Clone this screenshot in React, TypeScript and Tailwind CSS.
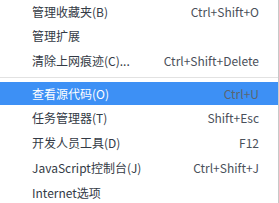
const items = [
  { label: '管理收藏夹(B)', key: 'Ctrl+Shift+O', h: 'h-[24px]' },
  { label: '管理扩展', key: '', h: 'h-[24px]' },
  { label: '清除上网痕迹(C)...', key: 'Ctrl+Shift+Delete', h: 'h-[25px]' },
];

const rest = [
  { label: '任务管理器(T)', key: 'Shift+Esc' },
  { label: '开发人员工具(D)', key: 'F12' },
  { label: 'JavaScript控制台(J)', key: 'Ctrl+Shift+J' },
  { label: 'Internet选项', key: '' },
];

function Row({ label, k, h, active }: { label: string; k: string; h: string; active?: boolean }) {
  return (
    <div
      className={`${h} flex items-center justify-between pl-[32px] pr-[19px] text-[12px] leading-none ${
        active ? 'bg-[#3d90f5] text-white' : 'text-[#333a45]'
      }`}
    >
      <span>{label}</span>
      <span className={active ? 'text-[#5b6470]' : 'text-[#4a505a]'}>{k}</span>
    </div>
  );
}

export default function App() {
  return (
    <div className="w-[279px] h-[203px] overflow-hidden bg-white font-['Noto_Sans_CJK_SC','Noto_Sans',sans-serif]">
      <div className="w-[279px] border-r border-[#c8c8c8] bg-white">
        {items.map((it) => (
          <Row key={it.label} label={it.label} k={it.key} h={it.h} />
        ))}
        <div className="h-[9px] flex items-center">
          <div className="h-px w-full bg-[#e2e2e2]" />
        </div>
        <Row label="查看源代码(O)" k="Ctrl+U" h="h-[23px]" active />
        {rest.map((it) => (
          <Row key={it.label} label={it.label} k={it.key} h="h-[25px]" />
        ))}
      </div>
    </div>
  );
}
